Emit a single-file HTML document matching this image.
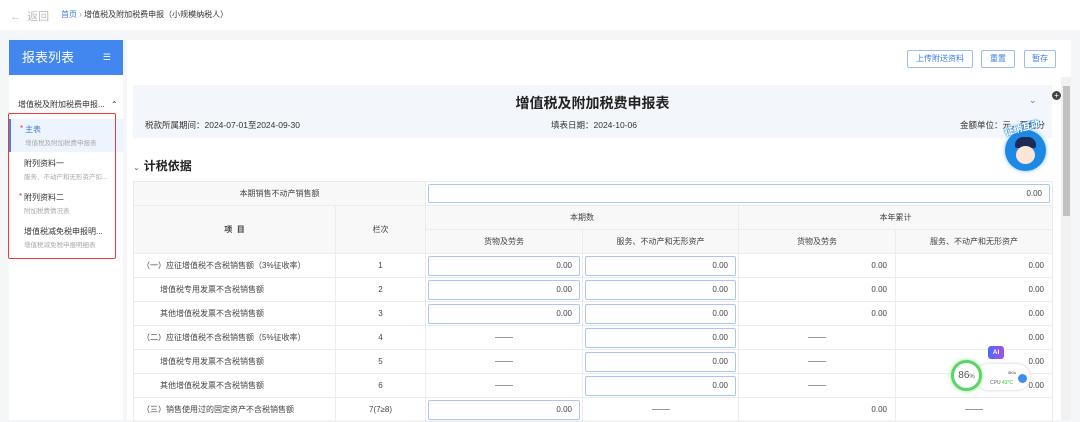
<!DOCTYPE html>
<html><head><meta charset="utf-8"><style>
*{margin:0;padding:0;box-sizing:border-box}
body{width:1080px;height:420px;overflow:hidden;background:#f5f6f8;font-family:"Liberation Sans","Noto Sans CJK SC",sans-serif;color:#333;position:relative;font-size:8px}
.a{position:absolute}
.top{left:0;top:0;width:1080px;height:30px;background:#fff}
.side{left:9px;top:40px;width:114px;height:380px;background:#fff}
.main{left:127px;top:40px;width:944px;height:380px;background:#fff}
.btn{top:50px;height:18px;border:1px solid #9dbcf2;border-radius:2px;color:#3d7be8;font-size:8px;line-height:16px;text-align:center;background:#fff}
.hdr{left:133px;top:85px;width:919px;height:53px;background:#f3f6fa}
table{position:absolute;left:133px;top:181px;border-collapse:collapse;table-layout:fixed;width:919px}
td{border:1px solid #ececec;font-size:8px;height:24px;text-align:center;color:#444;padding:0}
.h td{background:#f8f8f8}
.l{text-align:left;padding-left:8px}
.l2{text-align:left;padding-left:26px}
.r{text-align:right;padding-right:8px}
.in{margin:0 2px;height:20px;border:1px solid #aac6f3;border-radius:2px;text-align:right;padding-right:7px;line-height:18px;background:#fff}
.dash{display:inline-block;width:18px;border-top:1px solid #999;vertical-align:middle}
.nav{left:9px;width:114px;font-size:8px}
</style></head><body>
<div class="a top"></div>
<div class="a" style="left:10px;top:8px;font-size:11px;color:#bbb">←&nbsp;&nbsp;返回</div>
<div class="a" style="left:61px;top:9px;font-size:8px;color:#333"><span style="color:#3d7be8">首页</span> <span style="color:#999">›</span> 增值税及附加税费申报（小规模纳税人）</div>

<div class="a side"></div>
<div class="a" style="left:9px;top:40px;width:114px;height:35px;background:#4286f0;color:#fff;font-size:13px;line-height:35px;padding-left:13px">报表列表<span style="position:absolute;right:12px;font-size:9px">☰</span></div>
<div class="a" style="left:18px;top:99px;font-size:8px;color:#333">增值税及附加税费申报... <span style="margin-left:4px">⌃</span></div>
<div class="a" style="left:9px;top:119px;width:114px;height:33px;background:#eef4fd;border-left:2px solid #4286f0"></div>
<div class="a nav" style="top:124px;left:25px;color:#3d7be8"><span style="color:#e33;position:absolute;left:-5px">*</span>主表</div>
<div class="a nav" style="top:137px;left:25px;color:#aaa;font-size:6.5px">增值税及附加税费申报表</div>
<div class="a nav" style="top:158px;left:24px">附列资料一</div>
<div class="a nav" style="top:171px;left:24px;color:#aaa;font-size:6.5px">服务、不动产和无形资产扣...</div>
<div class="a nav" style="top:192px;left:24px"><span style="color:#e33;position:absolute;left:-5px">*</span>附列资料二</div>
<div class="a nav" style="top:205px;left:24px;color:#aaa;font-size:6.5px">附加税费情况表</div>
<div class="a nav" style="top:226px;left:24px">增值税减免税申报明...</div>
<div class="a nav" style="top:239px;left:24px;color:#aaa;font-size:6.5px">增值税减免税申报明细表</div>
<div class="a" style="left:8px;top:113px;width:108px;height:146px;border:1.5px solid #f03a3a;border-radius:2px"></div>

<div class="a main"></div>
<div class="a btn" style="left:907px;width:66px">上传附送资料</div>
<div class="a btn" style="left:981px;width:34px">重置</div>
<div class="a btn" style="left:1024px;width:32px">暂存</div>
<div class="a hdr"></div>
<div class="a" style="left:133px;width:919px;top:93px;text-align:center;font-size:14px;font-weight:bold;color:#222">增值税及附加税费申报表</div>
<div class="a" style="left:1029px;top:95px;color:#3d7be8;font-size:9px">⌄</div>
<div class="a" style="left:145px;top:119px;font-size:8.5px">税款所属期间：2024-07-01至2024-09-30</div>
<div class="a" style="left:551px;top:119px;font-size:8.5px">填表日期：2024-10-06</div>
<div class="a" style="left:960px;top:119px;font-size:8.5px">金额单位：元，至角分</div>
<div class="a" style="left:133px;top:157px;font-size:12px;font-weight:bold;color:#222"><span style="font-size:8px;color:#666;font-weight:normal;margin-right:4px">⌄</span>计税依据</div>

<table>
<colgroup><col style="width:202px"><col style="width:90px"><col style="width:157px"><col style="width:156px"><col style="width:157px"><col style="width:157px"></colgroup>
<tr class="h"><td colspan="2" style="height:23px">本期销售不动产销售额</td><td colspan="4" style="background:#fff"><div class="in" style="height:19px">0.00</div></td></tr>
<tr class="h"><td rowspan="2"><b style="font-weight:bold">项 &nbsp;目</b></td><td rowspan="2">栏次</td><td colspan="2">本期数</td><td colspan="2">本年累计</td></tr>
<tr class="h"><td>货物及劳务</td><td>服务、不动产和无形资产</td><td>货物及劳务</td><td>服务、不动产和无形资产</td></tr>
<tr><td class="l">（一）应征增值税不含税销售额（3%征收率）</td><td>1</td><td><div class="in">0.00</div></td><td><div class="in">0.00</div></td><td class="r">0.00</td><td class="r">0.00</td></tr>
<tr><td class="l2">增值税专用发票不含税销售额</td><td>2</td><td><div class="in">0.00</div></td><td><div class="in">0.00</div></td><td class="r">0.00</td><td class="r">0.00</td></tr>
<tr><td class="l2">其他增值税发票不含税销售额</td><td>3</td><td><div class="in">0.00</div></td><td><div class="in">0.00</div></td><td class="r">0.00</td><td class="r">0.00</td></tr>
<tr><td class="l">（二）应征增值税不含税销售额（5%征收率）</td><td>4</td><td><span class="dash"></span></td><td><div class="in">0.00</div></td><td><span class="dash"></span></td><td class="r">0.00</td></tr>
<tr><td class="l2">增值税专用发票不含税销售额</td><td>5</td><td><span class="dash"></span></td><td><div class="in">0.00</div></td><td><span class="dash"></span></td><td class="r">0.00</td></tr>
<tr><td class="l2">其他增值税发票不含税销售额</td><td>6</td><td><span class="dash"></span></td><td><div class="in">0.00</div></td><td><span class="dash"></span></td><td class="r">0.00</td></tr>
<tr><td class="l">（三）销售使用过的固定资产不含税销售额</td><td>7(7≥8)</td><td><div class="in">0.00</div></td><td><span class="dash"></span></td><td class="r">0.00</td><td><span class="dash"></span></td></tr>
</table>

<div class="a" style="left:1061px;top:77px;width:10px;height:343px;background:#f1f1f1"></div>
<div class="a" style="left:1063px;top:86px;width:7px;height:130px;background:#c1c1c1"></div>
<div class="a" style="left:1052px;top:91px;width:9px;height:9px;border-radius:50%;background:#444;color:#fff;font-size:8px;line-height:9px;text-align:center">+</div>

<div class="a" style="left:1005px;top:130px;width:41px;height:41px;border-radius:50%;background:#1e88e5;box-shadow:0 0 4px #7bbdf5"></div>
<div class="a" style="left:1015px;top:137px;width:21px;height:11px;border-radius:8px 8px 2px 2px;background:#1d2a55"></div>
<div class="a" style="left:1016px;top:146px;width:19px;height:18px;border-radius:50%;background:#fde6d6"></div>
<div class="a" style="left:1004px;top:121px;color:#fff;font-size:9px;font-weight:bold;transform:rotate(-15deg);text-shadow:0 0 2px #1e88e5,0 0 2px #1e88e5">征纳互动</div>

<div class="a" style="left:988px;top:346px;width:16px;height:13px;border-radius:3px;background:linear-gradient(90deg,#4a6cf7,#a34ff0);color:#fff;font-size:6.5px;line-height:13px;text-align:center;font-weight:bold">AI</div>
<div class="a" style="left:975px;top:364px;width:55px;height:26px;border-radius:13px;background:#fff;box-shadow:0 0 3px #ccc"></div>
<div class="a" style="left:951px;top:360px;width:31px;height:31px;border-radius:50%;background:#fff;border:3px solid #5bd46a;box-shadow:0 0 4px #8de38f;font-size:10px;color:#555;text-align:center;line-height:25px">86<span style="font-size:6px">%</span></div>
<div class="a" style="left:990px;top:380px;font-size:5px;color:#666">CPU <span style="color:#3c3">43°C</span></div>
<div class="a" style="left:1008px;top:370px;font-size:4px;color:#333">0K/s</div>
<div class="a" style="left:1018px;top:374px;width:9px;height:9px;border-radius:50%;background:#3d8ef0"></div>
</body></html>
